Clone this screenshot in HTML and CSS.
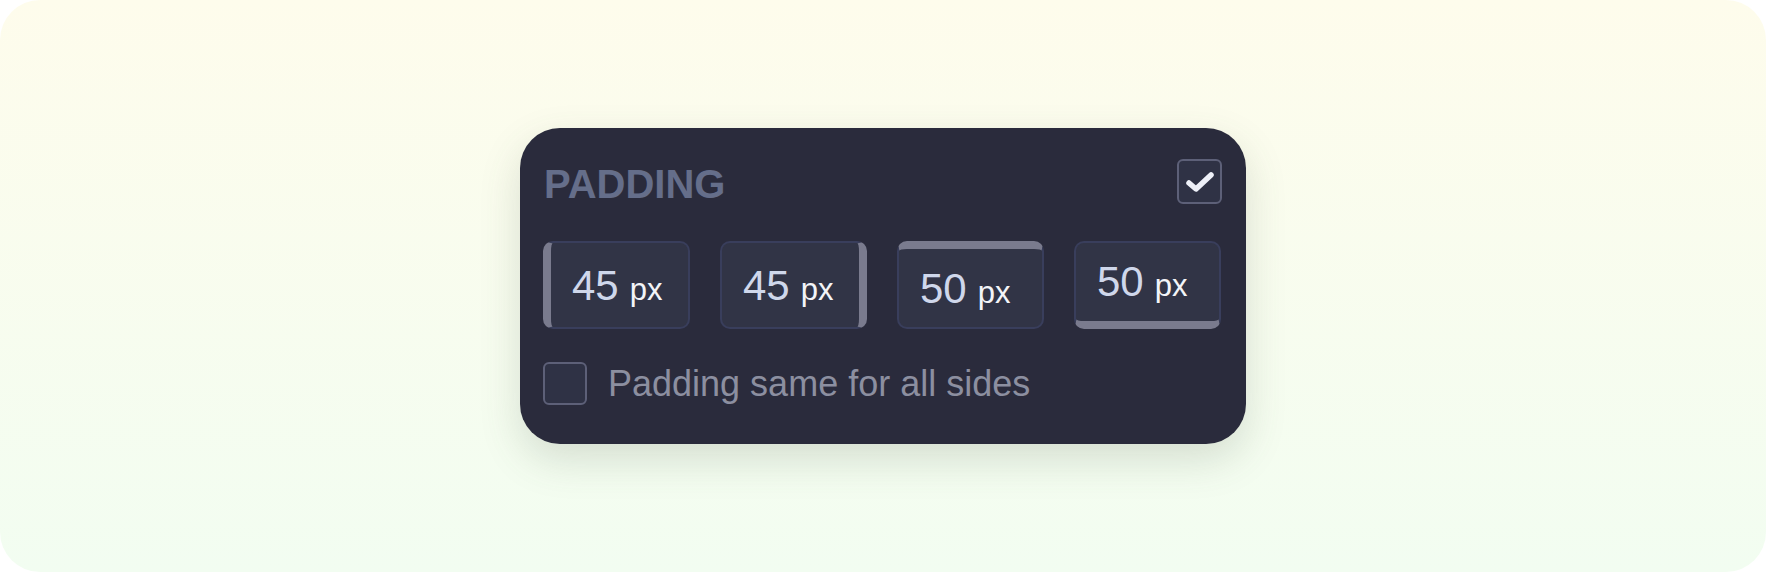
FILE: index.html
```html
<!DOCTYPE html>
<html lang="en">
<head>
    <meta charset="UTF-8">
    <meta name="viewport" content="width=device-width, initial-scale=1.0">
    <title>Padding control</title>
    <link rel="stylesheet" href="styles.css">
</head>
<body>
    <div class="frame">
        <div class="card">
            <div class="card-header">
                <h2 class="title">PADDING</h2>
                <span class="checkbox checked">
                    <svg width="30" height="24" viewBox="0 0 30 24">
                        <polyline points="4,13 11,19 26,5" fill="none" stroke="#eef0f8" stroke-width="5.5" stroke-linecap="round" stroke-linejoin="round"/>
                    </svg>
                </span>
            </div>
            <div class="sides">
                <div class="side side-left"><span class="value"><span class="num">45</span><span class="unit">px</span></span></div>
                <div class="side side-right"><span class="value"><span class="num">45</span><span class="unit">px</span></span></div>
                <div class="side side-top"><span class="value"><span class="num">50</span><span class="unit">px</span></span></div>
                <div class="side side-bottom"><span class="value"><span class="num">50</span><span class="unit">px</span></span></div>
            </div>
            <label class="same-row">
                <span class="checkbox"></span>
                <span class="same-label">Padding same for all sides</span>
            </label>
        </div>
    </div>
</body>
</html>
```

FILE: styles.css
```css
body, html {
    height: 100%;
    margin: 0;
    padding: 0;
    background-color: #ffffff;
    font-family: 'Liberation Sans', Arial, sans-serif;
    overflow: hidden;
}
.frame {
    height: 100%;
    border-radius: 40px;
    background: linear-gradient(180deg, #fefcec 0%, #f2fdf1 100%);
    display: flex;
    align-items: center;
    justify-content: center;
}
.card {
    width: 726px;
    height: 316px;
    box-sizing: border-box;
    padding: 31px 24px 40px 23px;
    background-color: #2a2b3c;
    border-radius: 40px;
    box-shadow: 0 16px 40px rgba(70, 90, 70, 0.18);
    display: flex;
    flex-direction: column;
}
.card-header {
    display: flex;
    justify-content: space-between;
    align-items: center;
    height: 45px;
}
.title {
    margin: 4px 0 0 1px;
    font-size: 40px;
    line-height: 1;
    font-weight: bold;
    color: #656e8a;
}
.checkbox {
    width: 44px;
    height: 43px;
    box-sizing: border-box;
    border: 2px solid #5d6078;
    border-radius: 6px;
    background-color: #2f3245;
    display: flex;
    align-items: center;
    justify-content: center;
    flex-shrink: 0;
}
.checkbox.checked {
    width: 45px;
    height: 45px;
}
.sides {
    display: flex;
    gap: 30px;
    margin-top: 37px;
}
.side {
    flex: none;
    width: 147px;
    height: 88px;
    box-sizing: border-box;
    border: 2px solid #393e5c;
    border-radius: 10px;
    background-color: #313446;
    display: flex;
    align-items: center;
    padding-left: 21px;
    padding-top: 2px;
}
.side-left {
    border-left: 8px solid #7a7b8e;
}
.side-right {
    border-right: 8px solid #7a7b8e;
}
.side-top {
    border-top: 8px solid #7a7b8e;
    padding-top: 2px;
}
.side-bottom {
    border-bottom: 8px solid #7a7b8e;
    padding-top: 0;
}
.value {
    line-height: 1;
    white-space: nowrap;
}
.num {
    font-size: 42px;
    color: #cfd7eb;
}
.unit {
    font-size: 31px;
    color: #f3f4f8;
    margin-left: 11px;
}
.same-row {
    display: flex;
    align-items: center;
    margin-top: 32px;
}
.same-label {
    margin-left: 21px;
    font-size: 36px;
    color: #8c8fa0;
    padding-top: 2px;
}
```
